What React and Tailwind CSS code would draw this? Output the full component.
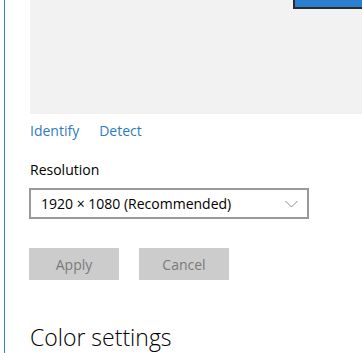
export default function App() {
  return (
    <div className="w-[362px] h-[353px] bg-white overflow-hidden flex" style={{ fontFamily: '"Open Sans", "Noto Sans", sans-serif' }}>
      <div className="w-[4px] shrink-0" />
      <div className="w-px shrink-0 bg-[#3a80d0]" />
      <div className="flex-1 pl-[25px] flex flex-col">
        <div className="relative h-[114px] bg-[#f2f2f2]">
          <div className="absolute left-[263px] top-0 w-[80px] h-[9px] bg-[#2b7fd0] border-l-2 border-b-2 border-[#2b2b2b]" />
        </div>
        <div className="mt-[7px] flex gap-[20px] text-[14px] leading-[20px] text-[#2e7bc4]">
          <span>Identify</span>
          <span>Detect</span>
        </div>
        <div className="mt-[19px] text-[14px] leading-[20px] text-black">Resolution</div>
        <div className="mt-[8px] -ml-px w-[280px] h-[31px] border-2 border-[#999999] flex items-center justify-between pl-[10px] pr-[9px] text-[14px] leading-[20px] text-black">
          <span>1920 × 1080 (Recommended)</span>
          <svg width="13" height="8" viewBox="0 0 13 8" fill="none">
            <path d="M0.5 1 L6.5 7 L12.5 1" stroke="#8a8a8a" strokeWidth="1" />
          </svg>
        </div>
        <div className="mt-[29px] -ml-px flex gap-[20px]">
          <div className="w-[90px] h-[32px] bg-[#cccccc] flex items-center justify-center text-[14px] text-[#7a7a7a]">Apply</div>
          <div className="w-[90px] h-[32px] bg-[#cccccc] flex items-center justify-center text-[14px] text-[#7a7a7a]">Cancel</div>
        </div>
        <div className="mt-[41px] text-[23px] leading-[32px] font-light text-black">Color settings</div>
      </div>
    </div>
  );
}
